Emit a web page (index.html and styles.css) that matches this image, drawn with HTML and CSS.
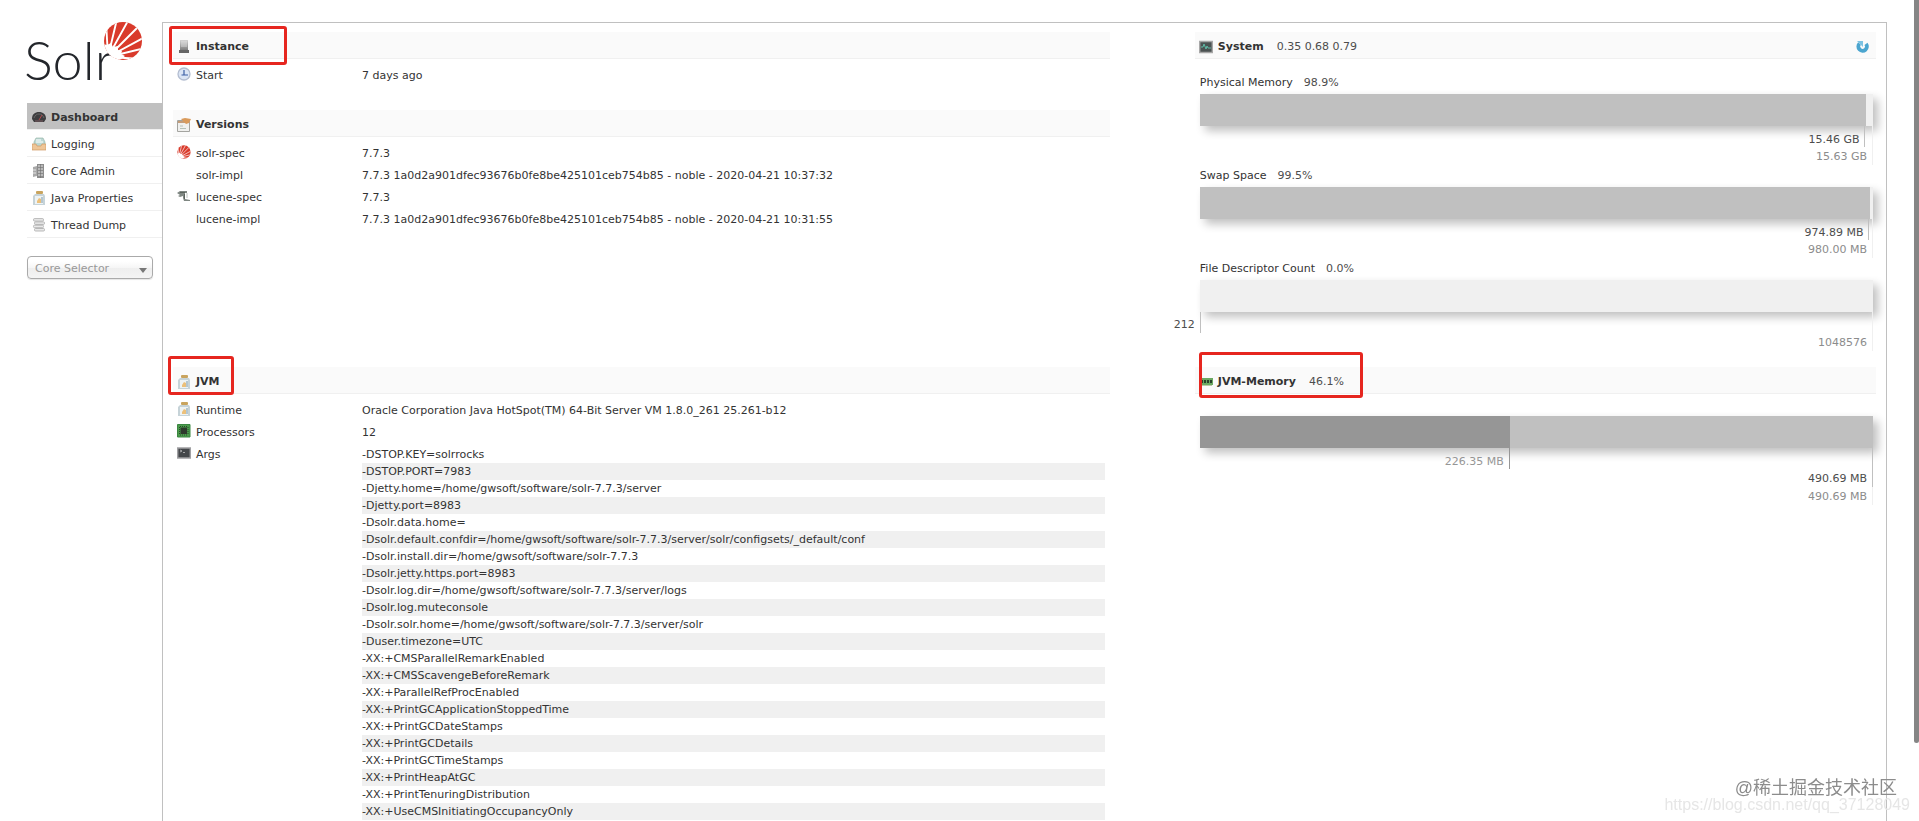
FILE: index.html
```html
<!DOCTYPE html>
<html lang="en">
<head>
<meta charset="utf-8">
<title>Solr Admin</title>
<link rel="stylesheet" href="styles.css">
</head>
<body>
<svg class="defs" aria-hidden="true">
  <defs>
    <clipPath id="burst-clip"><circle cx="20" cy="20" r="19"/></clipPath>
    <linearGradient id="server-fill" x1="0" y1="0" x2="0" y2="1"><stop offset="0" stop-color="#d4d4d4"/><stop offset="1" stop-color="#808080"/></linearGradient>
    <symbol id="burst" viewBox="0 0 40 40">
      <g clip-path="url(#burst-clip)">
        <rect width="40" height="40" fill="#d93a2b"/>
        <g stroke="#fff" stroke-width="1.900">
          <path d="M5 36L3 0M5 36L14 -2M5 36L26 -2M5 36L37 4M5 36L42 16M5 36L42 27M5 36L40 38"/>
        </g>
        <path d="M-4 22L4 24L8 22L10 26L15 25L15 29L19 30L18 33L22 35L18 38L10 44L-4 42Z" fill="#fff"/>
      </g>
    </symbol>
    <symbol id="jar" viewBox="0 0 14 14">
      <rect x="4" y="0" width="7" height="3" rx="1" fill="#c9a45e"/>
      <path d="M3 3h9l1 2v9H1V5z" fill="#c6d3d8"/>
      <path d="M3 5h8v8H3z" fill="#eef3f4"/>
      <path d="M5 10l2-3 2 1v4H5z" fill="#ecc07a"/>
      <path d="M9 6h2v6H9z" fill="#b4c6d0"/>
    </symbol>
  </defs>
</svg>

<aside class="sidebar">
  <a class="logo" href="#" aria-label="Solr">
    <svg viewBox="0 0 116 60" width="116" height="60">
      <text class="logo-word" x="-3" y="58">Solr</text>
      <use href="#burst" x="76" y="-1" width="40" height="40"/>
    </svg>
  </a>
  <nav class="menu">
    <a class="menu-item is-active" href="#">
      <svg class="icon" viewBox="0 0 14 14"><path d="M0 9C0 4 3 2 7 2s7 2 7 7l-2 3H2z" fill="#3d3d3f"/><path d="M2 8c1-3 3-4 5-4s4 1 5 4" stroke="#666" fill="none"/><path d="M7 10l3-5" stroke="#b0474a"/><path d="M3 10h8v2H3z" fill="#5c4c50"/></svg>
      Dashboard</a>
    <a class="menu-item" href="#">
      <svg class="icon" viewBox="0 0 14 14"><path d="M2 5l2-4h7l2 4v5H2z" fill="#bcd8d4" stroke="#8fae9f" stroke-width=".6"/><path d="M4 3h5M4 5h7" stroke="#fff"/><path d="M0 7h4l1 2h4l1-2h4v6H0z" fill="#efc698" stroke="#d09a63" stroke-width=".7"/></svg>
      Logging</a>
    <a class="menu-item" href="#">
      <svg class="icon" viewBox="0 0 14 14"><path d="M1 3l4-1v10l-4 1z" fill="#a9a9a9"/><path d="M5 0h7v14H5z" fill="#8c8c8c"/><path d="M6 2h5M6 5h5M6 8h5M6 11h5M1 6h3M1 9h3" stroke="#e5e5e5"/><path d="M8.500 0v14" stroke="#6f6f6f" stroke-width=".6"/></svg>
      Core Admin</a>
    <a class="menu-item" href="#"><svg class="icon"><use href="#jar"/></svg>Java Properties</a>
    <a class="menu-item" href="#">
      <svg class="icon" viewBox="0 0 14 14"><g fill="#e9e9e9" stroke="#a8a8a8" stroke-width=".8"><rect x="1.500" y=".6" width="10" height="2.500" rx="1"/><rect x="2.500" y="3.900" width="10" height="2.500" rx="1"/><rect x="1.500" y="7.200" width="10" height="2.500" rx="1"/><rect x="2.500" y="10.500" width="10" height="2.500" rx="1"/></g></svg>
      Thread Dump</a>
  </nav>
  <div class="selector">
    <select aria-label="Core Selector"><option>Core Selector</option></select>
    <svg class="selector-arrow" viewBox="0 0 8 5" aria-hidden="true"><path d="M0 0h8L4 5z" fill="#777"/></svg>
  </div>
</aside>

<main class="content">
  <div class="column">
    <section>
      <h2 class="title"><svg class="icon" viewBox="0 0 14 14"><path d="M3 0h8v10H3z" fill="url(#server-fill)"/><path d="M4 2h6M4 4h6M4 6h6" stroke="#eee" stroke-width=".7"/><path d="M2 10h10v3H2z" fill="#666"/></svg>Instance<span class="mark mark-instance"></span></h2>
      <dl class="facts">
        <dt><svg class="icon" viewBox="0 0 14 14"><circle cx="7" cy="7" r="6" fill="#dbe5f5" stroke="#b3bdd0" stroke-width="1.300"/><path d="M7 3v5h4M4.500 8h2" stroke="#3b5fa5" stroke-width="1.200" fill="none"/></svg>Start</dt>
        <dd>7 days ago</dd>
      </dl>
    </section>
    <section>
      <h2 class="title"><svg class="icon" viewBox="0 0 14 14"><path d="M.5 2.500h12v11H.5z" fill="#f0f0ee" stroke="#a4a4a0"/><path d="M1 4h11" stroke="#c49c78" stroke-width="2"/><path d="M3 8h3M3 10.500h6" stroke="#b5c0b6"/><path d="M4 1l4-1 6 1-2 4-3 1z" fill="#d99a5b"/></svg>Versions</h2>
      <dl class="facts">
        <dt><svg class="icon"><use href="#burst"/></svg>solr-spec</dt>
        <dd>7.7.3</dd>
        <dt><span class="icon"></span>solr-impl</dt>
        <dd>7.7.3 1a0d2a901dfec93676b0fe8be425101ceb754b85 - noble - 2020-04-21 10:37:32</dd>
        <dt><svg class="icon" viewBox="0 0 14 14"><path d="M0 4l3-2h7v2H8v6l5 1v1H7l-1-3V7L3 8 1 7l2-1z" fill="#7f8782"/><path d="M3 3.500h5M7.500 5v5" stroke="#59615b"/><path d="M10 4v5" stroke="#bcc2bd"/></svg>lucene-spec</dt>
        <dd>7.7.3</dd>
        <dt><span class="icon"></span>lucene-impl</dt>
        <dd>7.7.3 1a0d2a901dfec93676b0fe8be425101ceb754b85 - noble - 2020-04-21 10:31:55</dd>
      </dl>
    </section>
  </div>

  <div class="column">
    <section>
      <h2 class="title"><svg class="icon" viewBox="0 0 14 14"><path d="M.7 1.500h12.600v11H.7z" fill="#4b5252" stroke="#a7a7a7" stroke-width="1.400"/><path d="M2 7h2l1-3 2 5 1-3 1 2h3" stroke="#62c4ae" fill="none" stroke-width=".9"/></svg>System<span class="title-value">0.35 0.68 0.79</span>
        <button class="reload" type="button" aria-label="Reload"><svg class="icon" viewBox="0 0 14 14"><path d="M3.500 3.500A4.300 4.300 0 1 0 10 3.800" stroke="#4ba5cf" stroke-width="3.800" fill="none"/><path d="M1 1h6v6z" fill="#7cc2e2"/></svg></button></h2>
      <div class="meters">
        <div class="meter">
          <p class="meter-label">Physical Memory<span class="meter-percent">98.9%</span></p>
          <div class="bar"><div class="bar-used" style="width:98.9%"></div></div>
          <div class="scale"><div class="scale-used" style="width:98.9%">15.46 GB</div><div class="scale-total">15.63 GB</div></div>
        </div>
        <div class="meter">
          <p class="meter-label">Swap Space<span class="meter-percent">99.5%</span></p>
          <div class="bar"><div class="bar-used" style="width:99.5%"></div></div>
          <div class="scale"><div class="scale-used" style="width:99.5%">974.89 MB</div><div class="scale-total">980.00 MB</div></div>
        </div>
        <div class="meter">
          <p class="meter-label">File Descriptor Count<span class="meter-percent">0.0%</span></p>
          <div class="bar"></div>
          <div class="scale"><div class="scale-used is-empty"><span class="scale-outside">212</span></div><div class="scale-total">1048576</div></div>
        </div>
      </div>
    </section>
  </div>

  <div class="column">
    <section>
      <h2 class="title"><svg class="icon"><use href="#jar"/></svg>JVM<span class="mark mark-jvm"></span></h2>
      <dl class="facts">
        <dt><svg class="icon"><use href="#jar"/></svg>Runtime</dt>
        <dd>Oracle Corporation Java HotSpot(TM) 64-Bit Server VM 1.8.0_261 25.261-b12</dd>
        <dt><svg class="icon" viewBox="0 0 14 14"><path d="M.5.500h12.500v12.500H.5z" fill="#4b9b4c" stroke="#3b8741"/><path d="M3.500 3.500h6.500v6.500h-6.500z" fill="#2d3a2c"/><path d="M3 2.500h8M3 11h8M2.500 3v8M11 3v8" stroke="#274c27" stroke-dasharray="1 1"/></svg>Processors</dt>
        <dd>12</dd>
        <dt><svg class="icon" viewBox="0 0 14 14"><path d="M.7 2h12.600v10H.7z" fill="#45484b" stroke="#a0a0a3" stroke-width="1.400"/><path d="M3 4l2 1-2 1M6 6.500h2" stroke="#cfcfcf" stroke-width=".7" fill="none"/></svg>Args</dt>
        <dd>
          <ul class="args">
            <li>-DSTOP.KEY=solrrocks</li>
            <li>-DSTOP.PORT=7983</li>
            <li>-Djetty.home=/home/gwsoft/software/solr-7.7.3/server</li>
            <li>-Djetty.port=8983</li>
            <li>-Dsolr.data.home=</li>
            <li>-Dsolr.default.confdir=/home/gwsoft/software/solr-7.7.3/server/solr/configsets/_default/conf</li>
            <li>-Dsolr.install.dir=/home/gwsoft/software/solr-7.7.3</li>
            <li>-Dsolr.jetty.https.port=8983</li>
            <li>-Dsolr.log.dir=/home/gwsoft/software/solr-7.7.3/server/logs</li>
            <li>-Dsolr.log.muteconsole</li>
            <li>-Dsolr.solr.home=/home/gwsoft/software/solr-7.7.3/server/solr</li>
            <li>-Duser.timezone=UTC</li>
            <li>-XX:+CMSParallelRemarkEnabled</li>
            <li>-XX:+CMSScavengeBeforeRemark</li>
            <li>-XX:+ParallelRefProcEnabled</li>
            <li>-XX:+PrintGCApplicationStoppedTime</li>
            <li>-XX:+PrintGCDateStamps</li>
            <li>-XX:+PrintGCDetails</li>
            <li>-XX:+PrintGCTimeStamps</li>
            <li>-XX:+PrintHeapAtGC</li>
            <li>-XX:+PrintTenuringDistribution</li>
            <li>-XX:+UseCMSInitiatingOccupancyOnly</li>
          </ul>
        </dd>
      </dl>
    </section>
  </div>

  <div class="column">
    <section>
      <h2 class="title"><svg class="icon" viewBox="0 0 14 14"><path d="M0 3h14v7H0z" fill="#6aa862"/><path d="M2 5h2v3H2zM5 5h2v3H5zM8 5h2v3H8zM11 5h2v3h-2z" fill="#27402a"/><path d="M1 10.500h12" stroke="#b9c9a5"/></svg>JVM-Memory<span class="title-value">46.1%</span><span class="mark mark-memory"></span></h2>
      <div class="meters">
        <div class="meter meter-plain">
          <div class="bar"><div class="bar-used"><div class="bar-heap" style="width:46.1%"></div></div></div>
          <div class="scale"><div class="scale-used is-full"><div class="scale-heap" style="width:46.1%">226.35 MB</div><div class="scale-committed">490.69 MB</div></div><div class="scale-total">490.69 MB</div></div>
        </div>
      </div>
    </section>
  </div>
</main>

<div class="scrollbar" aria-hidden="true"></div>
<div class="watermark">
  <span class="watermark-name">@稀土掘金技术社区</span>
  <span class="watermark-url">https://blog.csdn.net/qq_37128049</span>
</div>
</body>
</html>
```
FILE: styles.css
```css
* {
  box-sizing: border-box;
  margin: 0;
  padding: 0;
}

html {
  height: 100%;
  overflow: hidden;
  background: #fff;
}

body {
  display: flex;
  min-height: 100%;
  padding: 22px 32px 0 27px;
  color: #333;
  font: 11px/17px Verdana, "DejaVu Sans", "Noto Sans CJK SC", sans-serif;
}

.defs {
  position: absolute;
  width: 0;
  height: 0;
}

.icon {
  flex: none;
  width: 14px;
  height: 14px;
}

/* Sidebar */

.sidebar {
  flex: none;
  width: 135px;
}

.logo {
  display: block;
  height: 81px;
}

.logo svg {
  display: block;
  overflow: visible;
}

.logo-word {
  fill: #23262b;
  font-family: Lato, sans-serif;
  font-size: 54px;
  font-weight: 300;
}

.menu {
  display: flex;
  flex-direction: column;
}

.menu-item {
  display: flex;
  align-items: center;
  gap: 5px;
  height: 27px;
  padding: 2px 0 0 5px;
  border-bottom: 1px solid #f0f0f0;
  color: #333;
  text-decoration: none;
}

.menu-item.is-active {
  background: #c0c0c0;
  font-weight: bold;
}

.selector {
  position: relative;
  width: 126px;
  margin-top: 18px;
}

.selector select {
  display: block;
  width: 100%;
  height: 23px;
  padding: 1px 20px 0 7px;
  appearance: none;
  border: 1px solid #aaa;
  border-radius: 4px;
  background: linear-gradient(#fff 20%, #f6f6f6 50%, #eee 52%, #f4f4f4);
  box-shadow: 0 1px 1px rgba(0, 0, 0, 0.1);
  color: #999;
  font: inherit;
}

.selector-arrow {
  position: absolute;
  top: 12px;
  right: 6px;
  width: 8px;
  height: 5px;
  pointer-events: none;
}

/* Dashboard */

.content {
  flex: 1;
  display: grid;
  grid-template-columns: 55% 40%;
  grid-template-rows: auto 1fr;
  justify-content: space-between;
  row-gap: 16px;
  padding: 9px 10px 0;
  border: 1px solid #c0c0c0;
  border-bottom: 0;
}

.column {
  display: flex;
  flex-direction: column;
  gap: 23px;
}

.title {
  position: relative;
  display: flex;
  align-items: center;
  gap: 5px;
  height: 27px;
  padding: 3px 4px 0;
  border-bottom: 1px solid #f0f0f0;
  background: #fafafa;
  font-size: 11px;
  line-height: 17px;
}

.title-value {
  margin-left: 8px;
  color: #4d4d4d;
  font-weight: normal;
}

.reload {
  display: flex;
  margin: 0 2px 0 auto;
  border: 0;
  background: none;
  cursor: pointer;
}

.mark {
  position: absolute;
  border: 3px solid #e6261f;
  border-radius: 3px;
}

.mark-instance {
  top: -6px;
  left: -4px;
  width: 118px;
  height: 39px;
}

.mark-jvm {
  top: -11px;
  left: -5px;
  width: 66px;
  height: 39px;
}

.mark-memory {
  top: -15px;
  left: 4px;
  width: 164px;
  height: 46px;
}

.facts {
  display: grid;
  grid-template-columns: 185px 1fr;
  padding: 6px 5px 0 4px;
}

.facts dt {
  display: flex;
  gap: 5px;
  height: 22px;
  padding: 2px 0;
}

.facts dd {
  padding: 2px 0 3px;
}

.args {
  list-style: none;
}

.args li:nth-child(even) {
  background: #f0f0f0;
}

/* Meters */

.meters {
  display: flex;
  flex-direction: column;
  gap: 2px;
  padding: 15px 3px 0 5px;
}

.meter-plain {
  padding-top: 7px;
}

.meter-label {
  margin-bottom: 3px;
}

.meter-percent {
  margin-left: 11px;
  color: #4d4d4d;
}

.bar {
  height: 32px;
  background: #f0f0f0;
  box-shadow: 5px 5px 10px #c0c0c0;
}

.bar-used {
  height: 100%;
  background: #c0c0c0;
}

.bar-heap {
  height: 100%;
  background: #969696;
}

.scale {
  border-right: 1px solid #f0f0f0;
  text-align: right;
}

.scale-used {
  height: 21px;
  padding: 5px 4px 0 0;
  border-right: 1px solid #c0c0c0;
  color: #4d4d4d;
}

.scale-used.is-empty {
  position: relative;
  width: 0;
  padding: 0;
}

.scale-outside {
  position: absolute;
  top: 4px;
  right: 5px;
}

.scale-used.is-full {
  height: auto;
  margin-right: -1px;
  padding: 0;
}

.scale-heap {
  height: 21px;
  padding: 5px 5px 0 0;
  border-right: 1px solid #969696;
  color: #969696;
}

.scale-committed {
  padding: 1px 5px 0 0;
}

.scale-total {
  padding: 1px 5px 0 0;
  color: #8c8c8c;
}

/* Overlays */

.scrollbar {
  position: fixed;
  top: 0;
  right: 0;
  width: 5px;
  height: 743px;
  border-radius: 0 0 3px 3px;
  background: #858585;
}

.watermark {
  position: fixed;
  right: 9px;
  bottom: 8px;
  display: flex;
  flex-direction: column;
  align-items: flex-end;
  font-family: "Liberation Sans", "Noto Sans CJK SC", sans-serif;
}

.watermark-name {
  margin-right: 13px;
  color: #8c8c8c;
  font-size: 18px;
  line-height: 18px;
}

.watermark-url {
  color: #e6e6e6;
  font-size: 16px;
  line-height: 16px;
}
```
